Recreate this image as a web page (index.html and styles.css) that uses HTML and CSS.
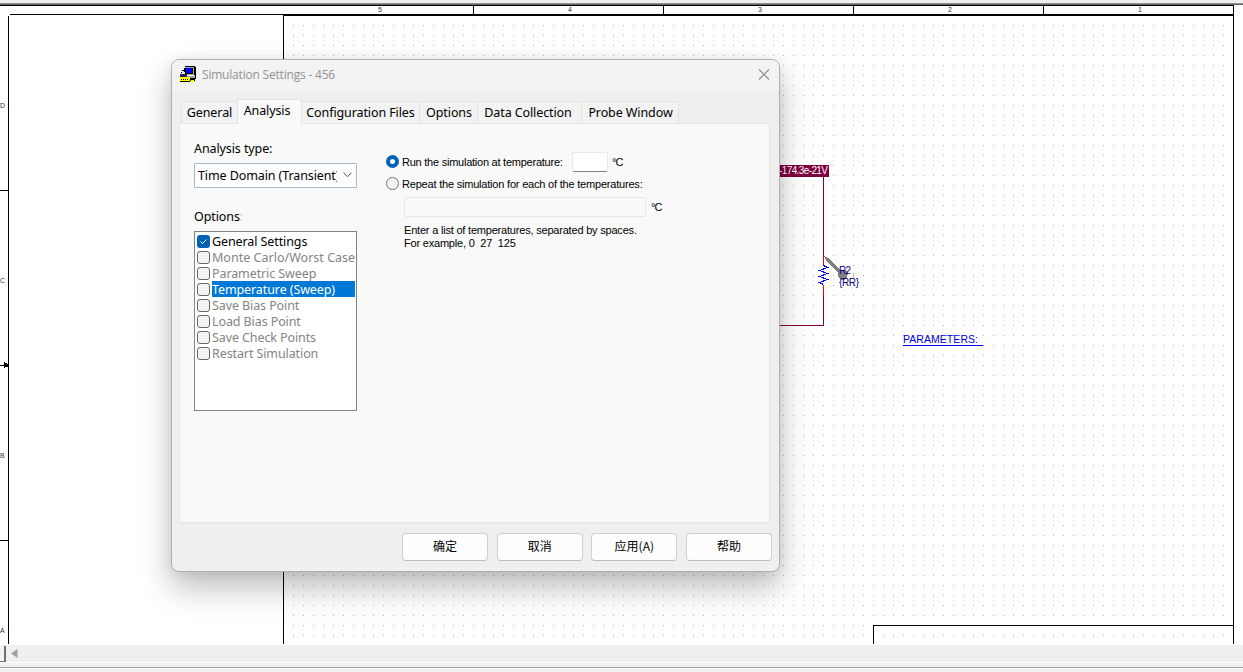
FILE: index.html
```
<!DOCTYPE html>
<html lang="zh-CN">
<head>
    <meta charset="UTF-8">
    <meta name="viewport" content="width=device-width, initial-scale=1.0">
    <title>Simulation Settings - 456</title>
    <link rel="stylesheet" href="styles.css">
</head>
<body>

    <div class="editor">
        <div class="frame-top"></div>

        <!-- Schematic sheet -->
        <svg class="sheet" width="1243" height="640" viewBox="0 5 1243 640" shape-rendering="crispEdges">
            <defs>
                <pattern id="grid" x="293" y="25" width="10" height="10" patternUnits="userSpaceOnUse">
                    <rect width="1" height="1" fill="#b4b4b4"/>
                </pattern>
            </defs>
            <rect x="293" y="25" width="931" height="619" fill="url(#grid)"/>

            <!-- borders and rulers -->
            <g fill="#000">
                <rect x="0" y="5" width="1234" height="1"/>
                <rect x="10" y="14" width="1224" height="1"/>
                <rect x="283" y="15" width="951" height="1"/>
                <rect x="8" y="16" width="1" height="628"/>
                <rect x="283" y="15" width="1" height="629"/>
                <rect x="1233" y="5" width="1" height="639"/>
                <rect x="473" y="5" width="1" height="9"/>
                <rect x="663" y="5" width="1" height="9"/>
                <rect x="853" y="5" width="1" height="9"/>
                <rect x="1043" y="5" width="1" height="9"/>
                <rect x="0" y="190" width="8" height="1"/>
                <rect x="0" y="540" width="8" height="1"/>
                <rect x="0" y="365" width="8" height="1"/>
                <path d="M4 362h1v1h2v1h1v3h-1v0h-2v1h-1z"/>
                <rect x="873" y="625" width="361" height="1"/>
                <rect x="873" y="625" width="1" height="19"/>
            </g>
            <g class="zone">
                <text x="378" y="12">5</text>
                <text x="568" y="12">4</text>
                <text x="758" y="12">3</text>
                <text x="948" y="12">2</text>
                <text x="1138" y="12">1</text>
                <text x="0" y="108">D</text>
                <text x="0" y="283">C</text>
                <text x="0" y="458">B</text>
                <text x="0" y="633">A</text>
            </g>

            <!-- wires -->
            <path d="M823.5 177v80M823.5 294v31.5H770" fill="none" stroke="#800040"/>
            <path d="M823.5 257v9M823.5 285v10" stroke="#f00"/>
            <path d="M823.5 265.5l4 2-8 3 8 3-8 3 8 3-8 3 4 2" fill="none" stroke="#0000e0"/>
            <rect x="770" y="165" width="59" height="12" fill="#800040"/>
            <text class="probe-value" x="779" y="174" textLength="49">-174.3e-21V</text>

            <!-- voltage probe -->
            <path d="M824 256l4 2 12 12h5l3 3-1 4-3 3h-3l-3-4v-3l-11-11z" fill="#808080"/>
            <rect x="853" y="273" width="1" height="6" fill="#e0b080"/>
            <text class="part" x="839" y="274" textLength="12">R2</text>
            <text class="part" x="839" y="286" textLength="20">{RR}</text>
            <text class="params" x="903" y="343" textLength="75">PARAMETERS:</text>
            <rect x="903" y="345" width="80" height="1" fill="#0000e0"/>
        </svg>

        <div class="scrollbar">
            <span class="splitter"></span>
            <svg width="7" height="9" viewBox="0 0 7 9"><path d="M6.500 0v9L0 4.500z" fill="#a0a0a0"/></svg>
        </div>
        <div class="frame-bottom"></div>
    </div>

    <div class="dialog">
        <div class="titlebar">
            <svg class="app-icon" width="16" height="16" viewBox="0 0 16 16" shape-rendering="crispEdges">
                <path d="M5 0h10v1h1v12h-1v1H8v-2H4V2h1z" fill="#000"/>
                <path d="M5 1h9v8h1v3H5z" fill="#a8a8a8"/>
                <path d="M5 2h8v6H5z" fill="#000"/>
                <path d="M6 2h6v5H6z" fill="#00f"/>
                <path d="M6 9h8v1H6z" fill="#ececec"/>
                <path d="M2 4h3v1h1v4H1V6h1z" fill="#000"/>
                <path d="M2 5h2v1h1v2H1V7h1z" fill="#e4e4e4"/>
                <path d="M0 8h7v3H0z" fill="#303030"/>
                <path d="M1 9h5v1H1z" fill="#00f"/>
                <path d="M0 11h10v4H0z" fill="#ff0"/>
                <path d="M0 15h10v1H0zM1 13h1v1H1zM3 13h1v1H3zM5 13h1v1H5zM7 13h1v1H7z" fill="#000"/>
                <path d="M10 12h5v3h-5z" fill="#000"/>
                <path d="M11 14h3v1h1v1h-5v-1h1z" fill="#ff0"/>
            </svg>
            <span class="title">Simulation Settings - 456</span>
            <svg class="close" width="12" height="11" viewBox="0 0 12 11">
                <path d="M1 .5l10 10M11 .5l-10 10" fill="none" stroke="#8a8a8a" stroke-width="1.100"/>
            </svg>
        </div>

        <div class="tabs">
            <div class="tab general">General</div>
            <div class="tab active">Analysis</div>
            <div class="tab config">Configuration Files</div>
            <div class="tab options">Options</div>
            <div class="tab data">Data Collection</div>
            <div class="tab probe">Probe Window</div>
        </div>

        <div class="panel">
            <div class="left">
                <div class="label">Analysis type:</div>
                <div class="combo">
                    <span class="combo-text">Time Domain (Transient)</span>
                    <svg width="9" height="6" viewBox="0 0 9 6"><path d="M.5.7l4 4 4-4" fill="none" stroke="#555"/></svg>
                </div>
                <div class="label second">Options<span class="cut">:</span></div>
                <div class="list">
                    <div class="item enabled">
                        <span class="check checked"><svg width="13" height="13" viewBox="0 0 13 13"><path d="M3.500 6.500l2 2 4-4" fill="none" stroke="#fff"/></svg></span>
                        <span class="name">General Settings</span>
                    </div>
                    <div class="item"><span class="check"></span><span class="name wide-name">Monte Carlo/Worst Case</span></div>
                    <div class="item"><span class="check"></span><span class="name">Parametric Sweep</span></div>
                    <div class="item selected"><span class="check"></span><span class="name">Temperature (Sweep)</span></div>
                    <div class="item"><span class="check"></span><span class="name">Save Bias Point</span></div>
                    <div class="item"><span class="check"></span><span class="name">Load Bias Point</span></div>
                    <div class="item"><span class="check"></span><span class="name">Save Check Points</span></div>
                    <div class="item"><span class="check"></span><span class="name">Restart Simulation</span></div>
                </div>
            </div>

            <div class="right">
                <div class="row run">
                    <span class="radio on"></span>
                    <span class="run-text">Run the simulation at temperature:</span>
                    <span class="field small"></span>
                    <span class="unit">°C</span>
                </div>
                <div class="row repeat">
                    <span class="radio"></span>
                    <span class="repeat-text">Repeat the simulation for each of the temperatures:</span>
                </div>
                <div class="row many">
                    <span class="field wide"></span>
                    <span class="unit">°C</span>
                </div>
                <div class="note">Enter a list of temperatures, separated by spaces.<br>For example, 0&nbsp; 27&nbsp; 125</div>
            </div>
        </div>

        <div class="buttons">
            <div class="button">确定</div>
            <div class="button">取消</div>
            <div class="button">应用(A)</div>
            <div class="button">帮助</div>
        </div>
    </div>

</body>
</html>
```
FILE: styles.css
```
body {
    margin: 0;
    overflow: hidden;
    background-color: #fff;
    font-family: "Noto Sans", "Noto Sans CJK SC", sans-serif;
    font-size: 12.5px;
    letter-spacing: -0.1px;
    color: #000;
}
.editor {
    width: 1243px;
    height: 672px;
}
.frame-top {
    box-sizing: border-box;
    height: 5px;
    background-color: #efefef;
    border-bottom: 1px solid #666;
    box-shadow: inset 0 -1px #909090;
}
.sheet {
    display: block;
    letter-spacing: 0;
}
.sheet text {
    font-family: "Liberation Sans", Arial, sans-serif;
}
.zone text {
    font-size: 7px;
    fill: #333;
}
.sheet .probe-value {
    font-size: 10px;
    fill: #fff;
}
.sheet .part {
    font-size: 10px;
    fill: #000080;
}
.sheet .params {
    font-size: 10.5px;
    fill: #0000e0;
}
.scrollbar {
    display: flex;
    align-items: center;
    gap: 5px;
    height: 17px;
    background-color: #efefef;
}
.splitter {
    box-sizing: border-box;
    width: 6px;
    height: 16px;
    background-color: #f4f4f4;
    border-right: 2px solid #707070;
    border-bottom: 1px solid #707070;
}
.frame-bottom {
    height: 10px;
    background: linear-gradient(#fff 1px, #efefef 1px, #efefef 5px, #a0a0a0 5px, #a0a0a0 6px, #fff 6px, #fff 7px, #efefef 7px);
}

/* Dialog */
.dialog {
    position: absolute;
    left: 171px;
    top: 59px;
    box-sizing: border-box;
    width: 609px;
    height: 513px;
    border: 1px solid #b0b0b0;
    border-radius: 8px;
    background-color: #efefef;
    box-shadow: 0 16px 32px rgba(0, 0, 0, 0.26), 0 1px 12px rgba(0, 0, 0, 0.08);
}
.titlebar {
    box-sizing: border-box;
    display: flex;
    align-items: center;
    height: 30px;
    padding: 0 9px 2px 8px;
    border-radius: 7px 7px 0 0;
    background-color: #f3f3f3;
}
.title {
    margin-left: 6px;
    font-family: "Open Sans", sans-serif;
    font-size: 12px;
    letter-spacing: -0.2px;
    color: #929292;
}
.close {
    margin-left: auto;
}
.tabs {
    display: flex;
    align-items: flex-end;
    height: 33px;
    padding-left: 9px;
}
.tab {
    box-sizing: border-box;
    height: 22px;
    border: 1px solid #e3e3e3;
    border-left: none;
    border-bottom: none;
    background-color: #f2f2f2;
    line-height: 21px;
    text-align: center;
    white-space: nowrap;
}
.tab.general {
    width: 56px;
    border-left: 1px solid #e3e3e3;
    border-right: none;
}
.tab.active {
    position: relative;
    width: 65px;
    height: 25px;
    margin-bottom: -1px;
    padding-right: 5px;
    border-left: 1px solid #e3e3e3;
    background-color: #f9f9f9;
}
.tab.config {
    width: 118px;
}
.tab.options {
    width: 58px;
    padding-left: 1px;
}
.tab.data {
    width: 104px;
    padding-right: 3px;
}
.tab.probe {
    width: 97px;
    padding-left: 1px;
}
.panel {
    box-sizing: border-box;
    display: flex;
    gap: 29px;
    width: 591px;
    height: 400px;
    margin-left: 7px;
    padding-left: 14px;
    border: 1px solid #e5e5e5;
    background-color: #f9f9f9;
}
.left {
    width: 163px;
    padding-top: 16px;
}
.label {
    height: 17px;
    margin-bottom: 6px;
    line-height: 17px;
}
.label.second {
    margin-top: 20px;
}
.cut {
    color: #e6c89c;
}
.combo {
    box-sizing: border-box;
    display: flex;
    align-items: center;
    justify-content: space-between;
    height: 25px;
    padding: 0 4px 1px 3px;
    border: 1px solid #a9b9c9;
    border-radius: 1px;
    background-color: #fcfdff;
}
.combo-text {
    width: 139px;
    overflow: hidden;
    white-space: nowrap;
}
.list {
    box-sizing: border-box;
    height: 180px;
    padding: 1px;
    border: 1px solid #7d838d;
    background-color: #fff;
}
.item {
    display: flex;
    align-items: center;
    gap: 2px;
    height: 16px;
    padding-left: 1px;
    color: #848484;
}
.check {
    box-sizing: border-box;
    flex: none;
    width: 13px;
    height: 13px;
    border: 1px solid #666;
    border-radius: 3px;
    background-color: #f3f3f3;
}
.check.checked {
    border: none;
    background-color: #0560b8;
}
.check svg {
    display: block;
}
.name {
    flex: 1;
    overflow: hidden;
    height: 16px;
    line-height: 17px;
    white-space: nowrap;
}
.wide-name {
    letter-spacing: 0.02px;
}
.enabled .name {
    color: #000;
}
.selected .name {
    background-color: #0078d7;
    color: #fff;
}

/* Temperature options */
.right {
    padding-top: 28px;
    font-family: "Liberation Sans", Arial, sans-serif;
    font-size: 11px;
    letter-spacing: -0.2px;
    white-space: nowrap;
}
.row {
    display: flex;
    align-items: center;
}
.row.run {
    height: 20px;
}
.row.repeat {
    height: 13px;
    margin-top: 5px;
}
.row.many {
    margin: 7px 0 7px 18px;
}
.radio {
    box-sizing: border-box;
    width: 13px;
    height: 13px;
    margin-right: 3px;
    border: 1px solid #707070;
    border-radius: 50%;
    background-color: #f3f3f3;
}
.radio.on {
    margin-bottom: 1px;
    border: 4px solid #0560b8;
    background-color: #fff;
}
.run-text {
    width: 170px;
    letter-spacing: -0.24px;
}
.field {
    box-sizing: border-box;
    height: 20px;
    border: 1px solid #e8e8e8;
    border-radius: 2px;
}
.field.small {
    width: 36px;
    border-bottom-color: #808080;
    background-color: #fff;
}
.field.wide {
    width: 242px;
}
.unit {
    margin-left: 4px;
    letter-spacing: -0.8px;
}
.many .unit {
    margin-left: 5px;
}
.note {
    margin-left: 18px;
    line-height: 13px;
}

/* Bottom buttons */
.buttons {
    display: grid;
    grid-template-columns: repeat(4, 86px);
    justify-content: space-between;
    width: 370px;
    margin: 10px 0 0 230px;
}
.button {
    box-sizing: border-box;
    height: 28px;
    border: 1px solid #d0d0d0;
    border-bottom-color: #bcbcbc;
    border-radius: 4px;
    background-color: #fdfdfd;
    font-family: "Noto Sans CJK SC", sans-serif;
    font-size: 12px;
    letter-spacing: 0;
    line-height: 24px;
    text-align: center;
}
```
